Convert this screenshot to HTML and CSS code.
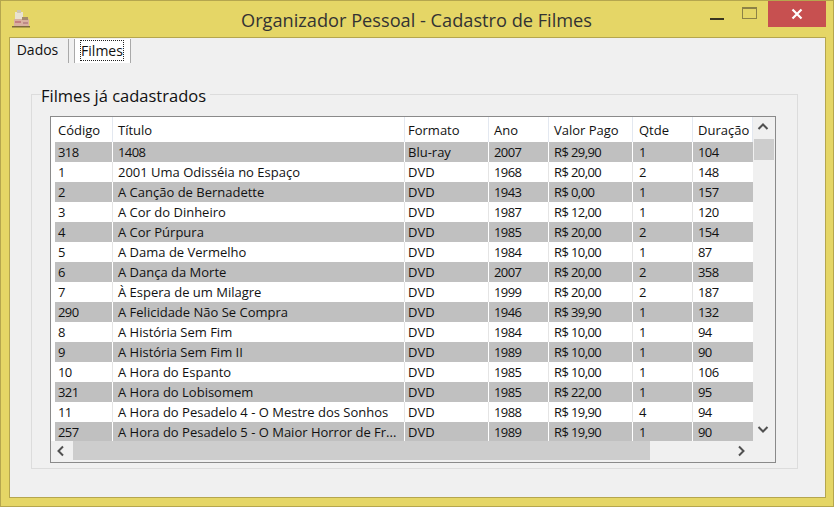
FILE: index.html
```html
<!DOCTYPE html>
<html lang="pt">
<head>
<meta charset="utf-8">
<title>Organizador Pessoal - Cadastro de Filmes</title>
<link rel="stylesheet" href="styles.css">
</head>
<body>
<div class="window">
  <header class="titlebar">
    <svg class="app-icon" width="24" height="24" viewBox="0 0 24 24">
      <rect x="7" y="5" width="8" height="8" fill="#e9e2d0"/>
      <rect x="9" y="3" width="4" height="3" fill="#cfc7b4"/>
      <rect x="6" y="12" width="15" height="7" fill="#d9b0a0"/>
      <rect x="7" y="14" width="6" height="2" fill="#c47f80"/>
      <rect x="14" y="10" width="6" height="3" fill="#a58a6c"/>
      <rect x="15" y="15" width="5" height="2" fill="#bd8a88"/>
      <rect x="4" y="19" width="18" height="1.5" fill="#7d6a3c"/>
    </svg>
    <h1 class="title">Organizador Pessoal - Cadastro de Filmes</h1>
    <div class="controls">
      <span class="ctl ctl-min"><i class="min-bar"></i></span>
      <span class="ctl ctl-max"><i class="max-box"></i></span>
      <span class="ctl ctl-close">
        <svg width="12" height="12" viewBox="0 0 12 12"><path d="M1.5 1.5l9 9M10.5 1.5l-9 9" stroke="#fff" stroke-width="2.2" fill="none"/></svg>
      </span>
    </div>
  </header>
  <main class="client">
    <nav class="tabs">
      <div class="tab tab-active">Dados</div>
      <div class="tab tab-focus"><span class="focus-ring">Filmes</span></div>
    </nav>
    <section class="group">
      <h2 class="legend">Filmes já cadastrados</h2>
      <div class="grid">
        <div class="viewport">
          <div class="row head">
            <span class="cell c1">Código</span><span class="cell c2">Título</span><span class="cell c3">Formato</span><span class="cell c4">Ano</span><span class="cell c5">Valor Pago</span><span class="cell c6">Qtde</span><span class="cell c7">Duração</span>
          </div>
          <div class="row alt"><span class="cell c1">318</span><span class="cell c2 digits">1408</span><span class="cell c3">Blu-ray</span><span class="cell c4">2007</span><span class="cell c5">R$ 29,90</span><span class="cell c6">1</span><span class="cell c7">104</span></div>
          <div class="row"><span class="cell c1">1</span><span class="cell c2">2001 Uma Odisséia no Espaço</span><span class="cell c3">DVD</span><span class="cell c4">1968</span><span class="cell c5">R$ 20,00</span><span class="cell c6">2</span><span class="cell c7">148</span></div>
          <div class="row alt"><span class="cell c1">2</span><span class="cell c2">A Canção de Bernadette</span><span class="cell c3">DVD</span><span class="cell c4">1943</span><span class="cell c5">R$ 0,00</span><span class="cell c6">1</span><span class="cell c7">157</span></div>
          <div class="row"><span class="cell c1">3</span><span class="cell c2">A Cor do Dinheiro</span><span class="cell c3">DVD</span><span class="cell c4">1987</span><span class="cell c5">R$ 12,00</span><span class="cell c6">1</span><span class="cell c7">120</span></div>
          <div class="row alt"><span class="cell c1">4</span><span class="cell c2">A Cor Púrpura</span><span class="cell c3">DVD</span><span class="cell c4">1985</span><span class="cell c5">R$ 20,00</span><span class="cell c6">2</span><span class="cell c7">154</span></div>
          <div class="row"><span class="cell c1">5</span><span class="cell c2">A Dama de Vermelho</span><span class="cell c3">DVD</span><span class="cell c4">1984</span><span class="cell c5">R$ 10,00</span><span class="cell c6">1</span><span class="cell c7">87</span></div>
          <div class="row alt"><span class="cell c1">6</span><span class="cell c2">A Dança da Morte</span><span class="cell c3">DVD</span><span class="cell c4">2007</span><span class="cell c5">R$ 20,00</span><span class="cell c6">2</span><span class="cell c7">358</span></div>
          <div class="row"><span class="cell c1">7</span><span class="cell c2">À Espera de um Milagre</span><span class="cell c3">DVD</span><span class="cell c4">1999</span><span class="cell c5">R$ 20,00</span><span class="cell c6">2</span><span class="cell c7">187</span></div>
          <div class="row alt"><span class="cell c1">290</span><span class="cell c2">A Felicidade Não Se Compra</span><span class="cell c3">DVD</span><span class="cell c4">1946</span><span class="cell c5">R$ 39,90</span><span class="cell c6">1</span><span class="cell c7">132</span></div>
          <div class="row"><span class="cell c1">8</span><span class="cell c2">A História Sem Fim</span><span class="cell c3">DVD</span><span class="cell c4">1984</span><span class="cell c5">R$ 10,00</span><span class="cell c6">1</span><span class="cell c7">94</span></div>
          <div class="row alt"><span class="cell c1">9</span><span class="cell c2">A História Sem Fim II</span><span class="cell c3">DVD</span><span class="cell c4">1989</span><span class="cell c5">R$ 10,00</span><span class="cell c6">1</span><span class="cell c7">90</span></div>
          <div class="row"><span class="cell c1">10</span><span class="cell c2">A Hora do Espanto</span><span class="cell c3">DVD</span><span class="cell c4">1985</span><span class="cell c5">R$ 10,00</span><span class="cell c6">1</span><span class="cell c7">106</span></div>
          <div class="row alt"><span class="cell c1">321</span><span class="cell c2">A Hora do Lobisomem</span><span class="cell c3">DVD</span><span class="cell c4">1985</span><span class="cell c5">R$ 22,00</span><span class="cell c6">1</span><span class="cell c7">95</span></div>
          <div class="row"><span class="cell c1">11</span><span class="cell c2">A Hora do Pesadelo 4 - O Mestre dos Sonhos</span><span class="cell c3">DVD</span><span class="cell c4">1988</span><span class="cell c5">R$ 19,90</span><span class="cell c6">4</span><span class="cell c7">94</span></div>
          <div class="row alt last"><span class="cell c1">257</span><span class="cell c2">A Hora do Pesadelo 5 - O Maior Horror de Fr...</span><span class="cell c3">DVD</span><span class="cell c4">1989</span><span class="cell c5">R$ 19,90</span><span class="cell c6">1</span><span class="cell c7">90</span></div>
        </div>
        <div class="vscroll">
          <svg class="arrow" width="20" height="20" viewBox="0 0 20 20"><path d="M5.5 12l4.5-4.5 4.5 4.5" stroke="#505050" stroke-width="2" fill="none"/></svg>
          <div class="vthumb"></div>
          <svg class="arrow arrow-end" width="20" height="20" viewBox="0 0 20 20"><path d="M5.5 8l4.5 4.5 4.5-4.5" stroke="#505050" stroke-width="2" fill="none"/></svg>
        </div>
        <div class="hscroll">
          <svg class="arrow arrow-start" width="20" height="20" viewBox="0 0 20 20"><path d="M12 5.5l-4.5 4.5 4.5 4.5" stroke="#505050" stroke-width="2" fill="none"/></svg>
          <div class="hthumb"></div>
          <svg class="arrow arrow-end" width="20" height="20" viewBox="0 0 20 20"><path d="M8 5.5l4.5 4.5-4.5 4.5" stroke="#505050" stroke-width="2" fill="none"/></svg>
        </div>
      </div>
    </section>
  </main>
</div>
</body>
</html>
```
FILE: styles.css
```css
* { box-sizing: border-box; margin: 0; padding: 0; }
html, body { width: 834px; height: 507px; overflow: hidden; }
body { font-family: "Open Sans", "Noto Sans", "Liberation Sans", sans-serif; color: #111; background: #e5d666; }

.window {
  width: 834px;
  height: 507px;
  display: flex;
  flex-direction: column;
  background: #e5d666;
  border: 1px solid #b5a64e;
  padding: 0 7px 8px 8px;
}

.titlebar { height: 36px; display: flex; align-items: center; position: relative; flex: none; }
.app-icon { margin: 0 0 0 -1px; flex: none; }
.title {
  position: absolute;
  left: 0; right: 0;
  top: 4px;
  padding-right: 2px;
  text-align: center;
  font-size: 18.2px;
  font-weight: 400;
  line-height: 30px;
  color: #333;
}
.controls { margin-left: auto; align-self: flex-start; display: flex; height: 26px; position: relative; }
.ctl { display: flex; align-items: center; justify-content: center; }
.ctl-min { width: 30px; }
.ctl-max { width: 34px; }
.min-bar { display: block; width: 14px; height: 2px; background: #3a3520; margin-top: 10px; }
.max-box { display: block; width: 15px; height: 12px; border: 1px solid #8d8246; border-top-width: 2px; margin-top: -2px; }
.ctl-close { width: 58px; background: #c75050; margin-left: 2px; }

.client {
  flex: 1;
  background: #f0f0f0;
  border: 1px solid #b5a64e;
  display: flex;
  flex-direction: column;
  min-height: 0;
}

.tabs { display: flex; height: 25px; flex: none; padding-top: 1px; }
.tab { font-size: 14px; line-height: 21px; }
.tab-active { width: 59px; padding-right: 3px; text-align: center; background: #f0f0f0; border-right: 1px solid #a9a9a9; }
.tab-focus {
  width: 57px;
  margin-left: 5px;
  background: #fff;
  border-left: 1px solid #a9a9a9;
  border-right: 1px solid #a9a9a9;
  padding: 1px 6px 0 5px;
  text-align: center;
}
.focus-ring { display: block; line-height: 19px; height: 21px; border: 1px dotted #222; }

.group {
  position: relative;
  margin: 31px 27px 0 21px;
  height: 375px;
  border: 1px solid #dcdcdc;
  padding: 21px 21px 0 18px;
}
.legend {
  position: absolute;
  top: -9px;
  left: 9px;
  padding-right: 4px;
  background: #f0f0f0;
  font-size: 16.5px;
  line-height: 20px;
  font-weight: 400;
}

.grid {
  width: 726px;
  height: 347px;
  background: #f0f0f0;
  border: 1px solid #8a8a8a;
  display: grid;
  grid-template-columns: 702px 22px;
  grid-template-rows: 324px 21px;
}
.viewport { background: #fff; padding-left: 4px; overflow: hidden; }

.row { display: flex; height: 20px; font-size: 13px; line-height: 20px; }
.head { height: 25px; line-height: 26px; margin-left: -4px; padding-left: 4px; }
.alt .cell { background: #c0c0c0; border-right-color: #fff; }
.last { height: 19px; }
.cell {
  display: block;
  flex: none;
  overflow: hidden;
  white-space: nowrap;
  padding-left: 3px;
  border-right: 1px solid #e4e4e4;
  height: 20px;
}
.head .cell { height: 25px; background: #fff; border-right: 1px solid #e3e8f0; }
.c1 { width: 58px; }
.c2 { width: 292px; padding-left: 5px; }
.c3 { width: 84px; padding-left: 3px; }
.c4 { width: 60px; padding-left: 5px; }
.c5 { width: 84px; padding-left: 5px; }
.c6 { width: 60px; padding-left: 6px; }
.c7 { width: 60px; padding-left: 5px; border-right: 0; }

.row:not(.head) .c1,
.row:not(.head) .c4,
.row:not(.head) .c5,
.row:not(.head) .c6,
.row:not(.head) .c7,
.digits { letter-spacing: -0.6px; }

.vscroll { display: flex; flex-direction: column; background: #f0f0f0; height: 324px; }
.vthumb { width: 20px; height: 21px; background: #cdcdcd; margin: 2px 0 0 1px; }
.hscroll { display: flex; align-items: flex-start; background: #f0f0f0; grid-column: 1 / -1; }
.hthumb { width: 577px; height: 19px; background: #cdcdcd; }
.arrow { flex: none; display: block; }
.arrow-start { margin-right: 2px; }
.vscroll .arrow-end { margin-top: auto; margin-bottom: 2px; }
.hscroll .arrow-end { margin-left: auto; margin-right: 24px; }
```
